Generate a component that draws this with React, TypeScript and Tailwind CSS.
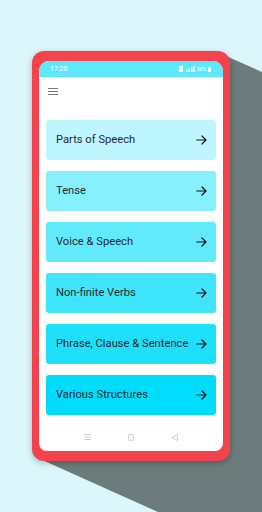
import React from "react";

const items = [
  { label: "Parts of Speech", bg: "bg-[#bdf6fe]" },
  { label: "Tense", bg: "bg-[#86f0fd]" },
  { label: "Voice & Speech", bg: "bg-[#60eafc]" },
  { label: "Non-finite Verbs", bg: "bg-[#3ee5fb]" },
  { label: "Phrase, Clause & Sentence", bg: "bg-[#1ee0fb]" },
  { label: "Various Structures", bg: "bg-[#00dcfb]" },
];

function Arrow() {
  return (
    <svg width="11" height="10" viewBox="0 0 11 10" fill="none" stroke="#111" strokeWidth="1.2" strokeLinecap="round" strokeLinejoin="round">
      <path d="M0.8 5H10M6 1l4 4-4 4" />
    </svg>
  );
}

export default function App() {
  return (
    <div className="relative w-[262px] h-[512px] overflow-hidden bg-[#dcf7fb]" style={{ fontFamily: "Roboto, 'Noto Sans', sans-serif" }}>
      <svg className="absolute inset-0" width="262" height="512" viewBox="0 0 262 512">
        <polygon points="226,56 262,72 262,512 158,512 40,459" fill="#6c7b7b" />
      </svg>
      <div className="relative ml-[32px] mt-[51px] w-[198px] h-[410px] rounded-[12px] bg-[#f4434d] px-[7px] pt-[10px] pb-[10px] shadow-[0_2px_6px_rgba(0,0,0,0.25)]">
        <div className="flex flex-col w-[184px] h-[390px] rounded-t-[10px] rounded-b-[8px] bg-white overflow-hidden">
          <div className="flex items-center justify-between h-[16px] bg-[#5fe9fc] pl-[11px] pr-[12px] text-white">
            <span className="text-[7px] leading-none mt-[1px]">17:20</span>
            <div className="flex items-center gap-[2px]">
              <svg width="4" height="6" viewBox="0 0 4 6"><rect x="0" y="0" width="4" height="6" fill="#fff" opacity="0.9" /></svg>
              <svg width="9" height="6" viewBox="0 0 9 6" className="ml-[1px]">
                <rect x="0" y="4" width="1.5" height="2" fill="#fff" />
                <rect x="2.5" y="3" width="1.5" height="3" fill="#fff" />
                <rect x="5" y="1.5" width="1.5" height="4.5" fill="#fff" />
                <rect x="7.5" y="0" width="1.5" height="6" fill="#fff" />
              </svg>
              <span className="text-[5px] leading-none">26%</span>
              <svg width="3" height="5" viewBox="0 0 3 5"><rect x="0" y="0" width="3" height="5" fill="#fff" /></svg>
            </div>
          </div>
          <div className="pl-[9px] pt-[11px] h-[43px]">
            <div className="flex flex-col gap-[2px] w-[10px]">
              <div className="h-[1px] bg-[#777]" />
              <div className="h-[1px] bg-[#777]" />
              <div className="h-[1px] bg-[#777]" />
            </div>
          </div>
          <div className="flex flex-col gap-[11px] px-[7px]">
            {items.map((it) => (
              <div key={it.label} className={`flex items-center justify-between h-[40px] rounded-[3px] pl-[10px] pr-[9px] ${it.bg}`}>
                <span className="text-[11.2px] text-[#2a2a2a]">{it.label}</span>
                <Arrow />
              </div>
            ))}
          </div>
          <div className="flex-1 flex items-center justify-center gap-[37px] pt-[8px]">
            <svg width="7" height="6" viewBox="0 0 7 6" stroke="#c4c4c4" strokeWidth="0.8">
              <path d="M0 0.5H7M0 3H7M0 5.5H7" />
            </svg>
            <svg width="6" height="7" viewBox="0 0 6 7" fill="none" stroke="#c4c4c4" strokeWidth="0.8">
              <rect x="0.5" y="0.5" width="5" height="6" rx="1" />
            </svg>
            <svg width="7" height="7" viewBox="0 0 7 7" fill="none" stroke="#c4c4c4" strokeWidth="0.8">
              <path d="M6.5 0.5V6.5L0.7 3.5Z" strokeLinejoin="round" />
            </svg>
          </div>
        </div>
      </div>
    </div>
  );
}
